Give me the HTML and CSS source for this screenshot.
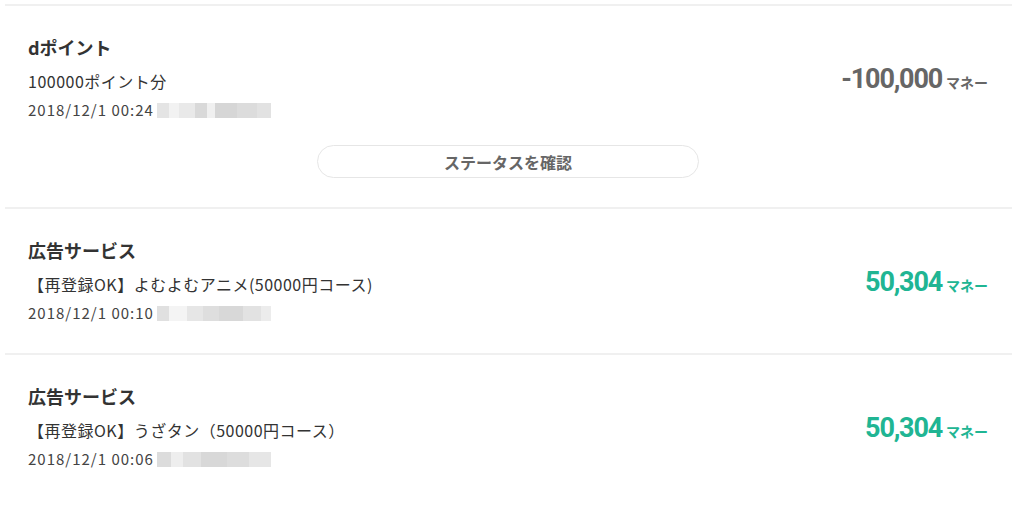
FILE: index.html
```html
<!DOCTYPE html>
<html lang="ja">
<head>
    <meta charset="UTF-8">
    <title>マネー履歴</title>
    <link rel="stylesheet" href="styles.css">
</head>
<body>
    <ul class="history">
        <li class="entry entry-with-button">
            <div class="entry-row">
                <div class="entry-info">
                    <p class="entry-title">dポイント</p>
                    <p class="entry-detail">100000ポイント分</p>
                    <p class="entry-date">2018/12/1 00:24 <span class="blur blur-a"></span></p>
                </div>
                <div class="amount amount-minus">-100,000<span class="unit">マネー</span></div>
            </div>
            <button type="button" class="status-button">ステータスを確認</button>
        </li>
        <li class="entry">
            <div class="entry-row">
                <div class="entry-info">
                    <p class="entry-title">広告サービス</p>
                    <p class="entry-detail">【再登録OK】よむよむアニメ(50000円コース)</p>
                    <p class="entry-date">2018/12/1 00:10 <span class="blur blur-b"></span></p>
                </div>
                <div class="amount amount-plus">50,304<span class="unit">マネー</span></div>
            </div>
        </li>
        <li class="entry">
            <div class="entry-row">
                <div class="entry-info">
                    <p class="entry-title">広告サービス</p>
                    <p class="entry-detail">【再登録OK】うざタン（50000円コース）</p>
                    <p class="entry-date">2018/12/1 00:06 <span class="blur blur-c"></span></p>
                </div>
                <div class="amount amount-plus">50,304<span class="unit">マネー</span></div>
            </div>
        </li>
    </ul>
</body>
</html>
```

FILE: styles.css
```css
body {
    margin: 0;
    padding: 0;
    background-color: #fff;
    font-family: 'Noto Sans CJK JP', 'Noto Sans', sans-serif;
    color: #333;
}

.history {
    list-style: none;
    margin: 4px 12px 0 5px;
    padding: 0;
}

.entry {
    border-top: 2px solid #f0f0f0;
    padding: 29px 24px 28px 23px;
    display: flex;
    flex-direction: column;
}

.entry-with-button {
    padding-bottom: 29px;
}

.entry-row {
    display: flex;
    align-items: center;
    justify-content: space-between;
}

.entry-info p {
    margin: 0;
}

.entry-title {
    font-size: 18px;
    font-weight: bold;
    line-height: 24px;
    margin-bottom: 10px !important;
}

.entry-detail {
    font-size: 16px;
    line-height: 24px;
    letter-spacing: 0.5px;
    margin-bottom: 5px !important;
}

.entry-date {
    font-size: 15px;
    line-height: 24px;
    letter-spacing: 1px;
    color: #444;
    display: flex;
    align-items: center;
    gap: 3px;
}

.blur {
    display: inline-block;
    width: 114px;
    height: 15px;
}

.blur-a {
    background: linear-gradient(90deg, #e4e4e4 0 12px, #f2f2f2 12px 22px, #e9e9e9 22px 38px, #d9d9d9 38px 50px, #f0f0f0 50px 58px, #d6d6d6 58px 80px, #dcdcdc 80px 100px, #e2e2e2 100px 114px);
}

.blur-b {
    background: linear-gradient(90deg, #e0e0e0 0 12px, #f4f4f4 12px 30px, #e6e6e6 30px 46px, #dedede 46px 62px, #d8d8d8 62px 86px, #e2e2e2 86px 104px, #ececec 104px 114px);
}

.blur-c {
    background: linear-gradient(90deg, #dcdcdc 0 14px, #eeeeee 14px 26px, #e2e2e2 26px 44px, #d8d8d8 44px 70px, #dddddd 70px 92px, #e6e6e6 92px 114px);
}

.amount {
    font-family: 'Roboto', sans-serif;
    font-size: 27px;
    font-weight: bold;
    letter-spacing: -1.2px;
    display: flex;
    align-items: baseline;
}

.amount-minus {
    color: #666;
}

.amount-plus {
    color: #20b593;
}

.unit {
    font-family: 'Noto Sans CJK JP', sans-serif;
    font-size: 14px;
    letter-spacing: 0;
    margin-left: 4px;
}

.status-button {
    align-self: center;
    margin-top: 23px;
    width: 382px;
    height: 33px;
    background-color: #fff;
    border: 1px solid #e6e6e6;
    border-radius: 17px;
    font-family: 'Noto Sans CJK JP', sans-serif;
    font-size: 16px;
    font-weight: bold;
    color: #666;
    cursor: pointer;
}
```
